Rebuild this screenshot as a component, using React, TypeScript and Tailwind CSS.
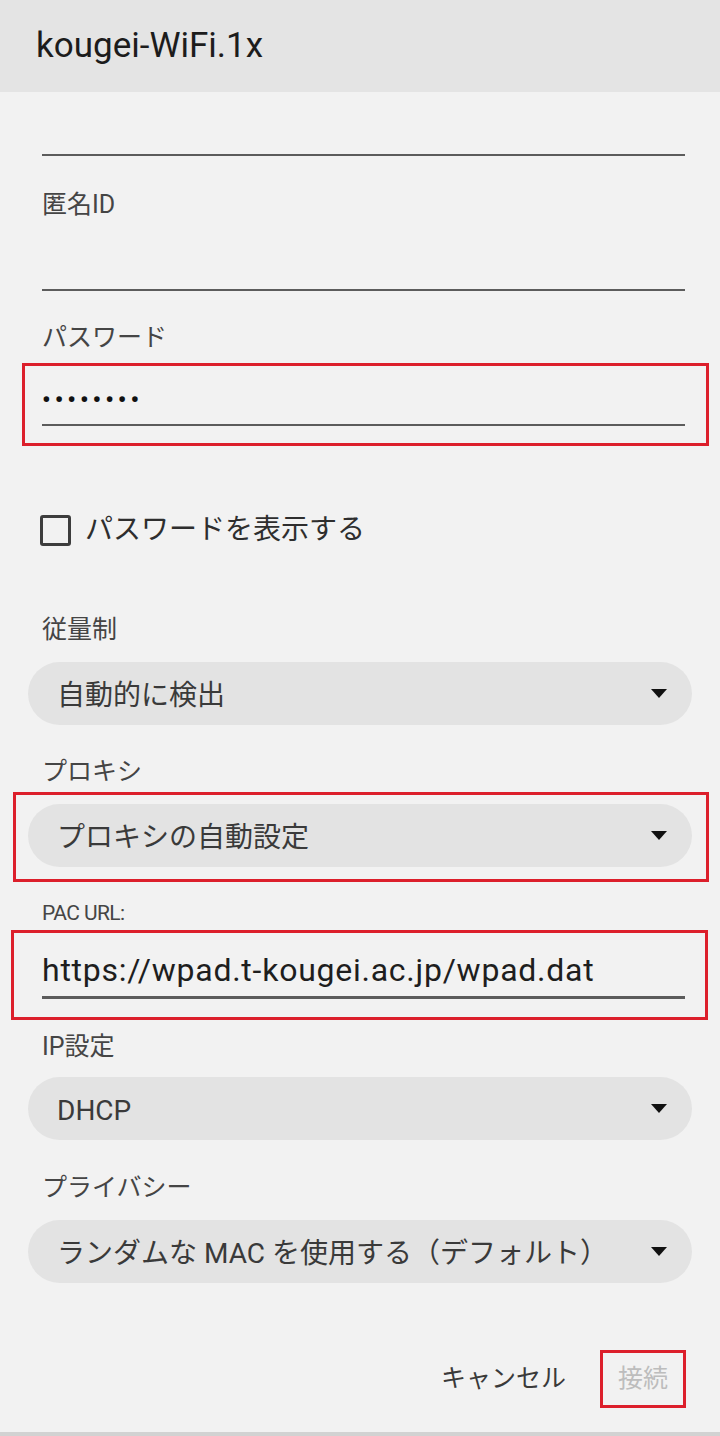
import React from "react";

const FONT = { fontFamily: '"Roboto", "Noto Sans CJK JP", sans-serif' };

function Arrow() {
  return (
    <svg width="16" height="9" viewBox="0 0 16 9" className="shrink-0">
      <polygon points="0,0 16,0 8,9" fill="#111" />
    </svg>
  );
}

function Dropdown({ text, className = "" }: { text: string; className?: string }) {
  return (
    <div
      className={`h-[63px] rounded-full bg-[#e3e3e3] flex items-center justify-between pl-[29px] pr-[25px] ${className}`}
    >
      <span className="text-[28px] text-[#3a3a3a] whitespace-nowrap pt-[4px]">{text}</span>
      <Arrow />
    </div>
  );
}

function Label({ text, className = "" }: { text: string; className?: string }) {
  return (
    <div className={`h-[32px] leading-[32px] text-[25px] text-[#454545] pl-[42px] ${className}`}>{text}</div>
  );
}

export default function App() {
  return (
    <div className="w-[720px] min-h-[1436px] bg-[#f2f2f2] flex flex-col" style={FONT}>
      <div className="h-[92px] bg-[#e4e4e4] flex items-center px-[36px]">
        <span className="text-[35px] text-[#1c1c1c]">kougei-WiFi.1x</span>
      </div>

      <div className="mt-[62px] ml-[42px] mr-[35px] h-[2px] bg-[#5c5c5c]" />

      <Label text="匿名ID" className="mt-[33px]" />
      <div className="mt-[68px] ml-[42px] mr-[35px] h-[2px] bg-[#5c5c5c]" />

      <Label text="パスワード" className="mt-[31px]" />
      <div className="mt-[9px] ml-[22px] mr-[11px] h-[83px] border-[3px] border-[#dc1f2b] flex flex-col pl-[17px] pr-[21px]">
        <div className="mt-[18px] h-[32px] leading-[32px] text-[24px] font-bold text-[#111] tracking-[4px]">••••••••</div>
        <div className="mt-[8px] h-[2px] bg-[#5c5c5c]" />
      </div>

      <div className="mt-[68px] h-[32px] flex items-center pl-[40px]">
        <div className="w-[31px] h-[31px] border-[3px] border-[#3d3d3d] rounded-[3px]" />
        <span className="ml-[14px] text-[28px] text-[#2e2e2e]">パスワードを表示する</span>
      </div>

      <Label text="従量制" className="mt-[68px]" />
      <Dropdown text="自動的に検出" className="mt-[16px] mx-[28px]" />

      <Label text="プロキシ" className="mt-[31px]" />
      <div className="mt-[4px] ml-[13px] mr-[11px] h-[90px] border-[3px] border-[#dc1f2b] pl-[12px] pr-[14px] pt-[9px]">
        <Dropdown text="プロキシの自動設定" />
      </div>

      <div className="mt-[15px] h-[32px] leading-[32px] text-[21px] tracking-[-0.6px] text-[#454545] pl-[42px]">PAC URL:</div>
      <div className="mt-[1px] ml-[11px] mr-[12px] h-[90px] border-[3px] border-[#dc1f2b] flex flex-col pl-[28px] pr-[20px]">
        <div className="mt-[17px] h-[40px] leading-[40px] text-[32px] tracking-[0.75px] text-[#1e1e1e] whitespace-nowrap">
          https://wpad.t-kougei.ac.jp/wpad.dat
        </div>
        <div className="mt-[6px] h-[3px] bg-[#5c5c5c]" />
      </div>

      <Label text="IP設定" className="mt-[11px]" />
      <Dropdown text="DHCP" className="mt-[14px] mx-[28px]" />

      <Label text="プライバシー" className="mt-[32px]" />
      <Dropdown text="ランダムな MAC を使用する（デフォルト）" className="mt-[16px] mx-[28px]" />

      <div className="mt-[67px] flex justify-end items-center pr-[34px]">
        <span className="text-[25px] text-[#3a3a3a] mr-[34px]">キャンセル</span>
        <div className="w-[86px] h-[58px] border-[3px] border-[#dc1f2b] flex items-center justify-center">
          <span className="text-[25px] text-[#bdbdbd]">接続</span>
        </div>
      </div>

      <div className="flex-1" />
      <div className="h-[4px] bg-[#d2d2d2]" />
    </div>
  );
}
